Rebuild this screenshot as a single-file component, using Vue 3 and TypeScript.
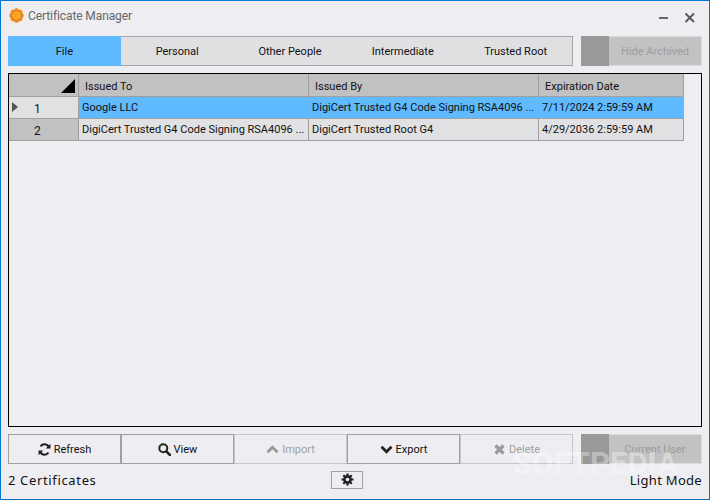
<script setup lang="ts">
const tabs: string[] = ['File', 'Personal', 'Other People', 'Intermediate', 'Trusted Root']
const rows = [
  { n: 1, to: 'Google LLC', by: 'DigiCert Trusted G4 Code Signing RSA4096 ...', exp: '7/11/2024 2:59:59 AM', sel: true },
  { n: 2, to: 'DigiCert Trusted G4 Code Signing RSA4096 ...', by: 'DigiCert Trusted Root G4', exp: '4/29/2036 2:59:59 AM', sel: false },
]
</script>

<template>
  <div class="window">
    <header class="titlebar">
      <svg class="logo" width="17" height="17" viewBox="0 0 17 17">
        <g stroke="#f7b23b" stroke-width="3.500"><path d="M8.500 1v15M1 8.500h15M3.200 3.200l10.600 10.600M13.800 3.200L3.200 13.800" /></g>
        <circle cx="8.500" cy="8.500" r="6.300" fill="#e8782a" />
        <circle cx="8.500" cy="8.500" r="4.600" fill="#f9a51f" />
      </svg>
      <span class="title">Certificate Manager</span>
      <span class="spacer"></span>
      <svg class="winbtn" width="12" height="12" viewBox="0 0 12 12"><rect x="1" y="5" width="9" height="2" fill="#666" /></svg>
      <svg class="winbtn close" width="12" height="12" viewBox="0 0 12 12"><path d="M1.500 1.500l8.500 8.500M10 1.500L1.500 10" stroke="#555" stroke-width="1.800" fill="none" /></svg>
    </header>

    <div class="toolbar">
      <div class="tabs">
        <div v-for="(t, i) in tabs" :key="t" class="tab" :class="{ active: i === 0 }">{{ t }}</div>
      </div>
      <div class="toggle"><span class="knob"></span><span class="toggle-label">Hide Archived</span></div>
    </div>

    <div class="grid-frame">
      <div class="grid">
        <div class="row head">
          <div class="rowhead corner"><span class="tri"></span></div>
          <div class="cell">Issued To</div>
          <div class="cell">Issued By</div>
          <div class="cell">Expiration Date</div>
        </div>
        <div v-for="r in rows" :key="r.n" class="row body" :class="{ sel: r.sel }">
          <div class="rowhead"><span v-if="r.sel" class="arrow"></span>{{ r.n }}</div>
          <div class="cell">{{ r.to }}</div>
          <div class="cell">{{ r.by }}</div>
          <div class="cell">{{ r.exp }}</div>
        </div>
      </div>
    </div>

    <div class="toolbar bottom">
      <div class="actions">
        <div class="btn">
          <svg width="13" height="13" viewBox="0 0 13 13" fill="none"><path d="M11 4.200A5 5 0 0 0 2.500 3.300M2 8.800A5 5 0 0 0 10.500 9.700" stroke="#222" stroke-width="2" /><path d="M12.500 .8v4.700H7.800zM.5 12.200V7.500h4.700z" fill="#222" /></svg>
          Refresh
        </div>
        <div class="btn">
          <svg width="13" height="13" viewBox="0 0 13 13" fill="none"><circle cx="5.300" cy="5.300" r="4" stroke="#222" stroke-width="2" /><path d="M8.300 8.300l3.700 3.700" stroke="#222" stroke-width="2.500" stroke-linecap="round" /></svg>
          View
        </div>
        <div class="btn off">
          <svg width="13" height="13" viewBox="0 0 13 13" fill="none"><path d="M1.500 9.200l5-5 5 5" stroke="#999" stroke-width="2.800" /></svg>
          Import
        </div>
        <div class="btn">
          <svg width="13" height="13" viewBox="0 0 13 13" fill="none"><path d="M1.500 3.800l5 5 5-5" stroke="#222" stroke-width="2.800" /></svg>
          Export
        </div>
        <div class="btn off">
          <svg width="13" height="13" viewBox="0 0 13 13" fill="none"><path d="M2.500 2.500l8 8M10.500 2.500l-8 8" stroke="#999" stroke-width="3.200" /></svg>
          Delete
        </div>
      </div>
      <div class="toggle"><span class="knob"></span><span class="toggle-label">Current User</span></div>
    </div>

    <footer class="status">
      <span class="count">2 Certificates</span>
      <div class="gear">
        <svg width="13" height="13" viewBox="0 0 13 13">
          <g stroke="#222" stroke-width="2.200"><path d="M6.500 .5v12M.5 6.500h12M2.300 2.300l8.400 8.400M10.700 2.300l-8.400 8.400" /></g>
          <circle cx="6.500" cy="6.500" r="4.400" fill="#222" />
          <circle cx="6.500" cy="6.500" r="1.800" fill="#eeeef2" />
        </svg>
      </div>
      <span class="mode">Light Mode</span>
    </footer>

    <div class="watermark">SOFTPEDIA</div>
  </div>
</template>

<style>
body { margin: 0; }
</style>

<style scoped>
.window {
  position: relative;
  width: 710px;
  height: 500px;
  box-sizing: border-box;
  border: 1px solid #0078d4;
  border-bottom-color: #0c6cb4;
  background: #eeeef2;
  display: flex;
  flex-direction: column;
  padding: 0 7px;
  font-family: Roboto, "Liberation Sans", sans-serif;
  font-size: 11px;
  color: #111;
  overflow: hidden;
}
.titlebar {
  height: 35px;
  display: flex;
  align-items: center;
  flex: none;
  padding: 0 6px 6px 0;
  box-sizing: border-box;
}
.logo { margin-right: 3px; }
.title { color: #666; font-size: 12px; letter-spacing: -0.1px; }
.spacer { flex: 1; }
.winbtn { margin: 4px 6px 0 0; }
.winbtn.close { margin: 4px 0 0 8px; }
.toolbar { display: flex; flex: none; gap: 8px; height: 30px; }
.tabs {
  display: flex;
  width: 565px;
  border: 1px solid #a6a6a6;
  border-width: 1px 1px 1px 0;
  box-sizing: border-box;
  background: #e0e0e2;
}
.tab { flex: 1; display: flex; align-items: center; justify-content: center; padding-top: 1px; }
.tab.active { background: #5fbaff; margin: -1px 0; }
.toggle {
  width: 121px;
  display: flex;
  background: #c2c2c2;
  box-sizing: border-box;
  border: 1px solid #dcdcdc;
  border-left: 0;
}
.knob { width: 28px; background: #999; margin: -1px 0; flex: none; }
.toggle-label { flex: 1; display: flex; align-items: center; justify-content: center; color: #9c9c9c; padding-top: 1px; }
.grid-frame {
  flex: 1;
  margin: 7px 0;
  border: 1px solid #000;
  background: #eeeef2;
  min-height: 0;
}
.grid { width: 675px; }
.row { display: grid; grid-template-columns: 70px 230px 230px 145px; }
.row.head { height: 23px; background: #c1c1c1; }
.row.body { height: 22px; background: #e1e1e3; }
.row.sel { background: #5fbaff; }
.cell, .rowhead {
  box-sizing: border-box;
  border-right: 1px solid #a0a0a0;
  border-bottom: 1px solid #a0a0a0;
  display: flex;
  align-items: center;
  padding-left: 3px;
  white-space: nowrap;
  overflow: hidden;
}
.sel .cell { border-right-color: #5fbaff; }
.head .cell { padding: 3px 0 0 6px; }
.rowhead {
  position: relative;
  background: #e1e1e3;
  padding: 2px 0 0 25px;
  font-size: 12px;
}
.row:nth-child(3) .rowhead { background: #c1c1c1; }
.corner { background: #c1c1c1; }
.tri {
  position: absolute;
  right: 3px;
  bottom: 3px;
  width: 0;
  height: 0;
  border-style: solid;
  border-width: 0 0 14px 14px;
  border-color: transparent transparent #000 transparent;
}
.arrow {
  position: absolute;
  left: 3px;
  top: 5px;
  width: 0;
  height: 0;
  border-style: solid;
  border-width: 5px 0 5px 6px;
  border-color: transparent transparent transparent #555;
}
.actions { display: flex; width: 565px; }
.btn {
  flex: 1;
  box-sizing: border-box;
  border: 1px solid #a0a0a0;
  display: flex;
  align-items: center;
  justify-content: center;
  gap: 3px;
}
.btn.off { color: #a0a0a0; border-color: #c6c6c6; }
.status {
  flex: none;
  height: 35px;
  display: grid;
  grid-template-columns: 323px 32px 1fr;
  align-items: center;
  font-family: "Noto Sans", sans-serif;
  font-size: 13px;
  letter-spacing: 0.65px;
  padding-bottom: 4px;
  box-sizing: border-box;
}
.gear {
  height: 18px;
  box-sizing: border-box;
  border: 1px solid #a0a0a0;
  display: flex;
  align-items: center;
  justify-content: center;
}
.mode { text-align: right; letter-spacing: 0.3px; }
.watermark {
  position: absolute;
  left: 512px;
  top: 444px;
  color: rgba(255, 255, 255, 0.35);
  font-size: 31px;
  font-weight: 700;
  pointer-events: none;
}
</style>
